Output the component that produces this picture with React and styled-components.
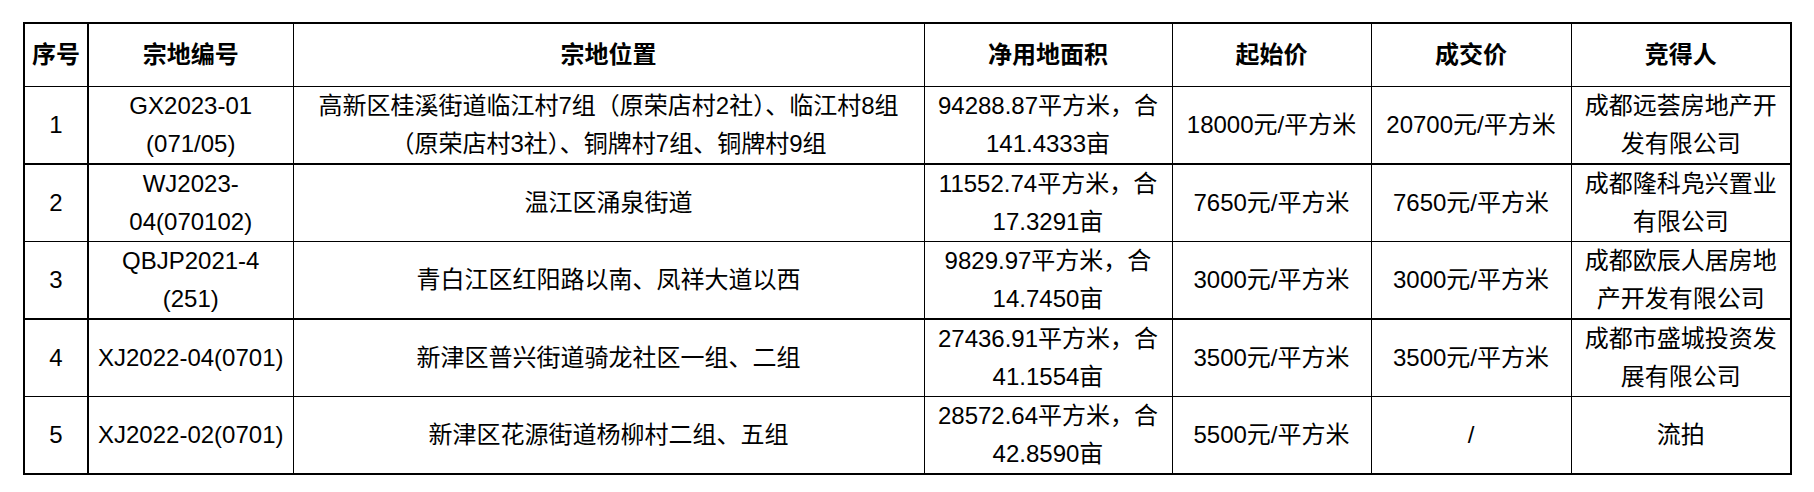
import React from "react";
import styled, { createGlobalStyle } from "styled-components";

const Global = createGlobalStyle`
  html, body { margin: 0; padding: 0; background: #fff; }
  body {
    font-family: "Liberation Sans", "Noto Sans CJK SC", sans-serif;
    color: #000;
  }
`;

const Page = styled.div`
  padding: 22px 0 0 23px;
  width: 1814px;
  height: 492px;
  box-sizing: border-box;
`;

const Table = styled.table`
  border-collapse: collapse;
  table-layout: fixed;
  width: 1767px;
  border: 2px solid #000;
  font-size: 24px;
  line-height: 38px;
`;

const HeadRow = styled.tr`
  height: 63px;
`;

const Row = styled.tr`
  height: ${(p) => p.$h}px;
  & > td {
    border-bottom: ${(p) => (p.$thick ? "2px" : "1px")} solid #000;
  }
`;

const HeadCell = styled.th`
  border: 1px solid #000;
  border-left-width: ${(p) => (p.$thickLeft ? "2px" : "1px")};
  font-weight: 700;
  text-align: center;
  vertical-align: middle;
  padding: 0;
  white-space: nowrap;
`;

const Cell = styled.td`
  border: 1px solid #000;
  border-left-width: ${(p) => (p.$thickLeft ? "2px" : "1px")};
  text-align: center;
  vertical-align: middle;
  padding: 0 2px;
  white-space: nowrap;
  overflow: hidden;
`;

const widths = [64, 205, 631, 248, 199, 200, 220];
const headers = ["序号", "宗地编号", "宗地位置", "净用地面积", "起始价", "成交价", "竞得人"];

const rows = [
  {
    h: 76,
    thick: true,
    cells: [
      ["1"],
      ["GX2023-01", "(071/05)"],
      ["高新区桂溪街道临江村7组（原荣店村2社）、临江村8组", "（原荣店村3社）、铜牌村7组、铜牌村9组"],
      ["94288.87平方米，合", "141.4333亩"],
      ["18000元/平方米"],
      ["20700元/平方米"],
      ["成都远荟房地产开", "发有限公司"],
    ],
  },
  {
    h: 76,
    cells: [
      ["2"],
      ["WJ2023-", "04(070102)"],
      ["温江区涌泉街道"],
      ["11552.74平方米，合", "17.3291亩"],
      ["7650元/平方米"],
      ["7650元/平方米"],
      ["成都隆科凫兴置业", "有限公司"],
    ],
  },
  {
    h: 76,
    thick: true,
    cells: [
      ["3"],
      ["QBJP2021-4", "(251)"],
      ["青白江区红阳路以南、凤祥大道以西"],
      ["9829.97平方米，合", "14.7450亩"],
      ["3000元/平方米"],
      ["3000元/平方米"],
      ["成都欧辰人居房地", "产开发有限公司"],
    ],
  },
  {
    h: 75,
    cells: [
      ["4"],
      ["XJ2022-04(0701)"],
      ["新津区普兴街道骑龙社区一组、二组"],
      ["27436.91平方米，合", "41.1554亩"],
      ["3500元/平方米"],
      ["3500元/平方米"],
      ["成都市盛城投资发", "展有限公司"],
    ],
  },
  {
    h: 76,
    cells: [
      ["5"],
      ["XJ2022-02(0701)"],
      ["新津区花源街道杨柳村二组、五组"],
      ["28572.64平方米，合", "42.8590亩"],
      ["5500元/平方米"],
      ["/"],
      ["流拍"],
    ],
  },
];

function Lines({ lines }) {
  return lines.map((l, i) => (
    <React.Fragment key={i}>
      {i > 0 && <br />}
      {l}
    </React.Fragment>
  ));
}

export default function App() {
  return (
    <>
      <Global />
      <Page>
        <Table>
          <colgroup>
            {widths.map((w, i) => (
              <col key={i} style={{ width: w }} />
            ))}
          </colgroup>
          <thead>
            <HeadRow>
              {headers.map((h, i) => (
                <HeadCell key={h} $thickLeft={i === 1}>
                  {h}
                </HeadCell>
              ))}
            </HeadRow>
          </thead>
          <tbody>
            {rows.map((r, ri) => (
              <Row key={ri} $h={r.h} $thick={r.thick}>
                {r.cells.map((c, ci) => (
                  <Cell key={ci} $thickLeft={ci === 1}>
                    <Lines lines={c} />
                  </Cell>
                ))}
              </Row>
            ))}
          </tbody>
        </Table>
      </Page>
    </>
  );
}
